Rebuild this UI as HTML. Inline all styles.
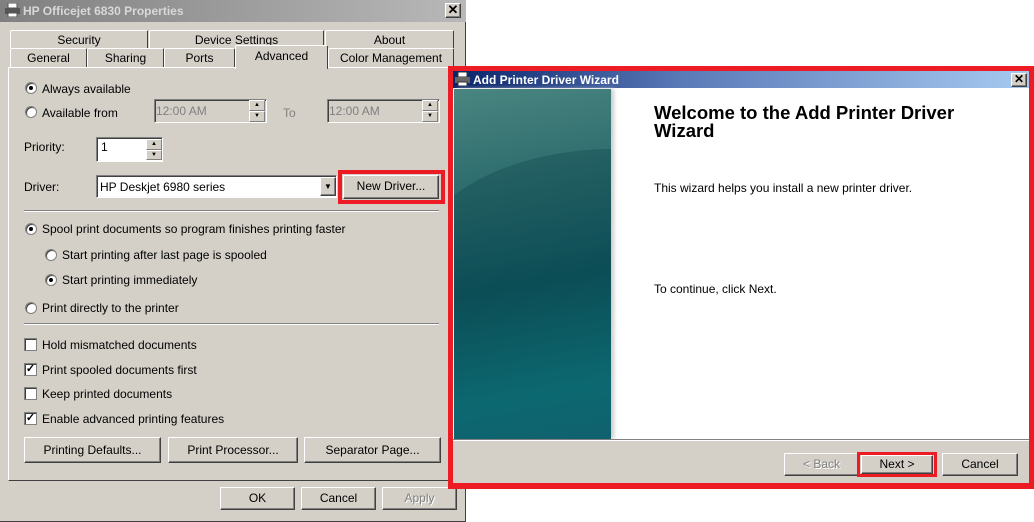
<!DOCTYPE html>
<html><head><style>
*{margin:0;padding:0;box-sizing:border-box}
html{overflow:hidden;width:1034px;height:522px}
body{width:1034px;height:522px;position:relative;overflow:hidden;background:#fff;font-family:"Liberation Sans",sans-serif;font-size:12px;color:#000}
.a{position:absolute}
.t{position:absolute;margin-top:1px}
.btn{position:absolute;background:#d4d0c8;border:1px solid;border-color:#fff #404040 #404040 #fff;box-shadow:inset -1px -1px 0 #808080;text-align:center;font-size:12px}
.sunk{position:absolute;background:#fff;border:1px solid;border-color:#808080 #fff #fff #808080;box-shadow:inset 1px 1px 0 #404040}
.rad{position:absolute;width:12px;height:12px;border-radius:50%;background:#fff;border:1px solid #808080;box-shadow:inset 1px 1px 0 #404040}
.rad.on::after{content:"";position:absolute;left:3px;top:3px;width:4px;height:4px;border-radius:50%;background:#000}
.chk{position:absolute;width:13px;height:13px;background:#fff;border:1px solid #808080;box-shadow:inset 1px 1px 0 #404040;font-size:11px;line-height:11px;text-align:center;font-weight:bold}
.tab{position:absolute;background:#d4d0c8;border:1px solid;border-bottom:none;border-color:#fff #404040 #fff #fff;border-radius:2px 2px 0 0;text-align:center;line-height:18px}
.spin{position:absolute;width:16px;background:#d4d0c8}
.spin div{height:50%;border:1px solid;border-color:#fff #808080 #808080 #fff;font-size:6px;text-align:center;line-height:8px}
</style></head><body>
<div class="a" style="left:0;top:0;width:466px;height:522px;background:#d4d0c8;border-right:1px solid #404040;border-bottom:1px solid #404040"></div>
<div class="a" style="left:0;top:0;width:466px;height:22px;background:linear-gradient(90deg,#808080,#b8b8b8);"></div>
<div class="a" style="left:5px;top:3px;width:15px;height:14px"><svg width="15" height="14"><rect x="3" y="0" width="9" height="5" fill="#fff" stroke="#555"/><rect x="0" y="5" width="15" height="6" fill="#555"/><rect x="3" y="10" width="9" height="4" fill="#fff" stroke="#555"/></svg></div>
<div class="a" style="left:23px;top:4px;color:#d8d8d8;font-weight:bold;font-size:12px">HP Officejet 6830 Properties</div>
<div class="btn" style="left:445px;top:3px;width:16px;height:15px;line-height:12px;font-weight:bold;font-size:13px">✕</div>

<div class="tab" style="left:10px;top:30px;width:138px;height:18px">Security</div>
<div class="tab" style="left:149px;top:30px;width:175px;height:18px">Device Settings</div>
<div class="tab" style="left:325px;top:30px;width:129px;height:18px">About</div>
<div class="tab" style="left:10px;top:48px;width:77px;height:19px">General</div>
<div class="tab" style="left:87px;top:48px;width:77px;height:19px">Sharing</div>
<div class="tab" style="left:164px;top:48px;width:71px;height:19px">Ports</div>
<div class="tab" style="left:328px;top:48px;width:126px;height:19px">Color Management</div>
<div class="a" style="left:8px;top:67px;width:442px;height:414px;border:1px solid;border-color:#fff #404040 #404040 #fff"></div>
<div class="tab" style="left:235px;top:45px;width:93px;height:24px;border-bottom:none;line-height:21px">Advanced</div>

<div class="rad on" style="left:25px;top:82px"></div><div class="t" style="left:42px;top:81px">Always available</div>
<div class="rad" style="left:25px;top:106px"></div><div class="t" style="left:42px;top:105px">Available from</div>
<div class="sunk" style="left:154px;top:99px;width:113px;height:24px;background:#d4d0c8"></div><div class="t" style="left:156px;top:103px;color:#808080">12:00 AM</div>
<div class="spin" style="left:249px;top:100px;height:22px"><div>▲</div><div>▼</div></div>
<div class="t" style="left:283px;top:105px;color:#808080">To</div>
<div class="sunk" style="left:327px;top:99px;width:113px;height:24px;background:#d4d0c8"></div><div class="t" style="left:329px;top:103px;color:#808080">12:00 AM</div>
<div class="spin" style="left:422px;top:100px;height:22px"><div>▲</div><div>▼</div></div>

<div class="t" style="left:24px;top:139px">Priority:</div>
<div class="sunk" style="left:96px;top:137px;width:67px;height:25px"></div><div class="t" style="left:101px;top:139px;font-size:12px">1</div>
<div class="spin" style="left:146px;top:139px;height:21px"><div>▲</div><div>▼</div></div>
<div class="t" style="left:24px;top:179px">Driver:</div>
<div class="sunk" style="left:96px;top:175px;width:241px;height:23px"></div><div class="t" style="left:100px;top:179px">HP Deskjet 6980 series</div>
<div class="btn" style="left:320px;top:177px;width:16px;height:19px;font-size:8px;line-height:17px">▼</div>
<div class="btn" style="left:343px;top:175px;width:96px;height:24px;line-height:21px">New Driver...</div>
<div class="a" style="left:338px;top:170px;width:107px;height:34px;border:4px solid #ed1c24"></div>
<div class="a" style="left:24px;top:210px;width:415px;height:2px;border-top:1px solid #808080;border-bottom:1px solid #fff"></div>

<div class="rad on" style="left:25px;top:223px"></div><div class="t" style="left:42px;top:221px">Spool print documents so program finishes printing faster</div>
<div class="rad" style="left:45px;top:249px"></div><div class="t" style="left:62px;top:247px">Start printing after last page is spooled</div>
<div class="rad on" style="left:45px;top:274px"></div><div class="t" style="left:62px;top:272px">Start printing immediately</div>
<div class="rad" style="left:25px;top:302px"></div><div class="t" style="left:42px;top:300px">Print directly to the printer</div>
<div class="a" style="left:24px;top:323px;width:415px;height:2px;border-top:1px solid #808080;border-bottom:1px solid #fff"></div>

<div class="chk" style="left:24px;top:338px"></div><div class="t" style="left:42px;top:337px">Hold mismatched documents</div>
<div class="chk" style="left:24px;top:363px">✓</div><div class="t" style="left:42px;top:362px">Print spooled documents first</div>
<div class="chk" style="left:24px;top:387px"></div><div class="t" style="left:42px;top:386px">Keep printed documents</div>
<div class="chk" style="left:24px;top:412px">✓</div><div class="t" style="left:42px;top:411px">Enable advanced printing features</div>
<div class="btn" style="left:24px;top:437px;width:137px;height:26px;line-height:24px">Printing Defaults...</div>
<div class="btn" style="left:168px;top:437px;width:130px;height:26px;line-height:24px">Print Processor...</div>
<div class="btn" style="left:304px;top:437px;width:137px;height:26px;line-height:24px">Separator Page...</div>
<div class="btn" style="left:220px;top:487px;width:75px;height:23px;line-height:20px">OK</div>
<div class="btn" style="left:301px;top:487px;width:75px;height:23px;line-height:20px">Cancel</div>
<div class="btn" style="left:382px;top:487px;width:75px;height:23px;line-height:20px;color:#808080;text-shadow:1px 1px #fff">Apply</div>

<div class="a" style="left:448px;top:66px;width:586px;height:423px;background:#ed1c24"></div>
<div class="a" style="left:453px;top:71px;width:576px;height:17px;background:linear-gradient(90deg,#0a246a,#5a7ab8 40%,#a6caf0)"></div>
<div class="a" style="left:455px;top:72px;width:15px;height:14px"><svg width="15" height="14"><rect x="3" y="0" width="9" height="5" fill="#fff" stroke="#333"/><rect x="0" y="5" width="15" height="6" fill="#666"/><rect x="3" y="10" width="9" height="4" fill="#fff" stroke="#333"/></svg></div>
<div class="a" style="left:473px;top:73px;color:#fff;font-weight:bold;font-size:12px">Add Printer Driver Wizard</div>
<div class="btn" style="left:1011px;top:73px;width:16px;height:14px;line-height:11px;font-weight:bold;font-size:12px">✕</div>
<div class="a" style="left:453px;top:88px;width:576px;height:352px;background:#fff"></div>
<div class="a" style="left:454px;top:89px;width:157px;height:350px;overflow:hidden;background:linear-gradient(170deg,#4a8580,#2a6a6c 30%,#10565f 55%,#117a82 85%,#15707e);box-shadow:3px 0 4px #ccc">
<div class="a" style="left:-40px;top:60px;width:400px;height:290px;border-radius:50% 50% 0 0/40% 40% 0 0;background:rgba(0,50,60,0.25)"></div></div>
<div class="a" style="left:654px;top:104px;font-weight:bold;font-size:18.5px;line-height:18px">Welcome to the Add Printer Driver<br>Wizard</div>
<div class="t" style="left:654px;top:180px">This wizard helps you install a new printer driver.</div>
<div class="t" style="left:654px;top:281px">To continue, click Next.</div>
<div class="a" style="left:453px;top:439px;width:576px;height:44px;background:#d4d0c8;border-top:1px solid #808080;box-shadow:inset 0 1px 0 #fff"></div>
<div class="btn" style="left:784px;top:453px;width:75px;height:23px;line-height:20px;color:#808080;text-shadow:1px 1px #fff">&lt; Back</div>
<div class="btn" style="left:861px;top:455px;width:72px;height:19px;line-height:17px">Next &gt;</div>
<div class="a" style="left:857px;top:452px;width:80px;height:25px;border:3px solid #ed1c24"></div>
<div class="btn" style="left:942px;top:453px;width:76px;height:23px;line-height:20px">Cancel</div>
</body></html>
